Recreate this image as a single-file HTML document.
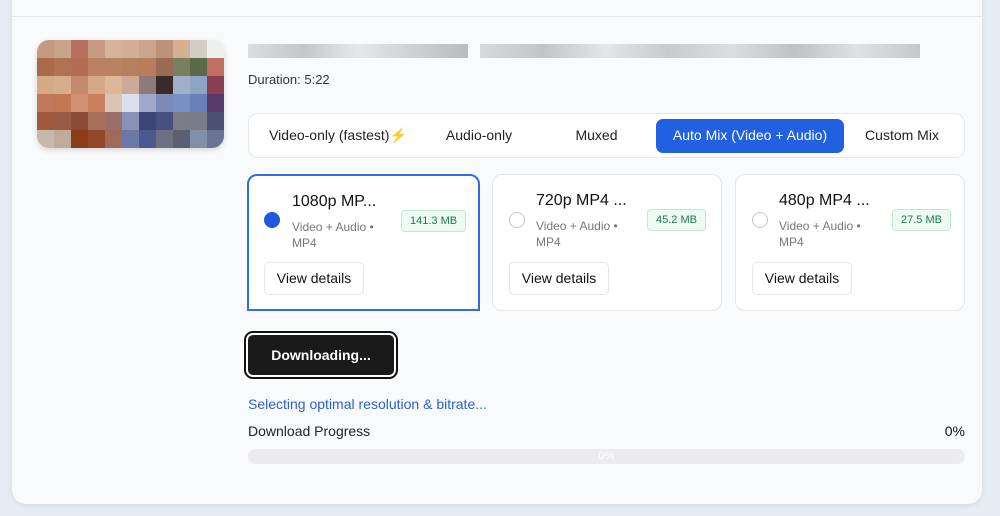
<!DOCTYPE html>
<html><head><style>
*{box-sizing:border-box;margin:0;padding:0}
body{width:1000px;height:516px;background:#e8ecf4;font-family:"Liberation Sans",sans-serif;position:relative;overflow:hidden;color:#111}
.card{position:absolute;left:12px;top:-20px;width:970px;height:524px;background:#f9fafc;border-radius:14px;box-shadow:0 2px 6px rgba(0,0,0,.08)}
.line{position:absolute;left:12px;top:16px;width:970px;height:1px;background:#e4e6ea}
.thumb{position:absolute;left:37px;top:40px;width:187px;height:108px;border-radius:12px;overflow:hidden;display:grid;grid-template-columns:repeat(11,1fr);grid-template-rows:repeat(6,1fr);box-shadow:0 2px 6px rgba(0,0,0,.15)}
.blur{position:absolute;top:44px;height:14px;background:#d4d6da}
.dur{position:absolute;left:248px;top:72px;font-size:13px;color:#333}
.tabs{position:absolute;left:248px;top:113px;width:717px;height:45px;background:#fff;border:1px solid #e5e7eb;border-radius:10px}
.tab{position:absolute;top:5px;height:34px;line-height:32px;font-size:14px;color:#222;text-align:center}
.tab.act{background:#2160e0;color:#fff;border-radius:7px}
.opt{position:absolute;top:174px;height:137px;background:#fff;border:1px solid #e3e5e9;border-radius:10px}
.opt.sel{border:2px solid #2f6fdc;border-radius:10px 10px 0 0}
.radio{position:absolute;left:16px;top:37px;width:16px;height:16px;border-radius:50%;border:1.5px solid #c4c6ca}
.sel .radio{background:#2158e0;border-color:#2158e0}
.t{position:absolute;left:43px;top:17px;font-size:16px;color:#111}
.s{position:absolute;left:43px;top:43px;font-size:12px;color:#777;line-height:16px;width:100px}
.badge{position:absolute;top:34px;height:22px;line-height:20px;padding:0 8px;font-size:11px;color:#1c7a4c;background:#ecfaf2;border:1px solid #bfe9d0;border-radius:4px}
.vd{position:absolute;left:16px;top:87px;width:100px;height:33px;line-height:31px;text-align:center;border:1px solid #e3e5e9;border-radius:5px;font-size:14px;background:#fff}
.btn{position:absolute;left:246px;top:333px;width:150px;height:44px;background:#1a1a1a;border:2px solid #fff;outline:2px solid #111;border-radius:7px;color:#fff;font-weight:bold;font-size:14px;text-align:center;line-height:40px}
</style></head><body>
<div class="card"></div>
<div class="line"></div>
<div class="thumb">
<div style="background:#c49a80"></div><div style="background:#c8a48c"></div><div style="background:#b7705e"></div><div style="background:#c79a86"></div><div style="background:#d6b49c"></div><div style="background:#d2ae96"></div><div style="background:#c9a58d"></div><div style="background:#bc927a"></div><div style="background:#d4b091"></div><div style="background:#d3cdc6"></div><div style="background:#eef0f0"></div>
<div style="background:#a86a48"></div><div style="background:#b07252"></div><div style="background:#b36d55"></div><div style="background:#b98262"></div><div style="background:#b98260"></div><div style="background:#b68060"></div><div style="background:#b97d5d"></div><div style="background:#9a6a52"></div><div style="background:#788060"></div><div style="background:#5a6a48"></div><div style="background:#c07060"></div>
<div style="background:#d4aa88"></div><div style="background:#d7ae8c"></div><div style="background:#c48a6e"></div><div style="background:#d8a888"></div><div style="background:#dcb896"></div><div style="background:#ccaa96"></div><div style="background:#8c7a7c"></div><div style="background:#3a2a28"></div><div style="background:#a0b0c8"></div><div style="background:#90a4c4"></div><div style="background:#8a4050"></div>
<div style="background:#c07a5a"></div><div style="background:#c27652"></div><div style="background:#d49074"></div><div style="background:#c9805e"></div><div style="background:#dcc4b4"></div><div style="background:#dce0ec"></div><div style="background:#a0a8cc"></div><div style="background:#7c8ab8"></div><div style="background:#7890c4"></div><div style="background:#6a80b8"></div><div style="background:#5a3a6a"></div>
<div style="background:#a05840"></div><div style="background:#9a5a48"></div><div style="background:#8c4a38"></div><div style="background:#a8705a"></div><div style="background:#9a6e6a"></div><div style="background:#8a90b8"></div><div style="background:#3c4478"></div><div style="background:#485080"></div><div style="background:#7c7c84"></div><div style="background:#787c88"></div><div style="background:#4a5070"></div>
<div style="background:#c8b8ac"></div><div style="background:#c0aa9a"></div><div style="background:#8a3c1c"></div><div style="background:#92482a"></div><div style="background:#a06a5a"></div><div style="background:#6a78a8"></div><div style="background:#4a5890"></div><div style="background:#6c7084"></div><div style="background:#5a6070"></div><div style="background:#8090a8"></div><div style="background:#6a7490"></div>
</div>
<div class="blur" style="left:248px;width:220px;background:linear-gradient(90deg,#dcdde0,#c4c6ca,#e6e7ea,#cfd0d3,#b9bbbf)"></div>
<div class="blur" style="left:480px;width:440px;background:linear-gradient(90deg,#d8d9dc,#c2c4c8,#e4e5e8,#c9cacd,#dcdde0,#bfc1c5,#e0e1e4,#c6c7cb)"></div>
<div class="dur">Duration: 5:22</div>
<div class="tabs">
<div class="tab" style="left:14px;width:150px">Video-only (fastest)<span style="color:#f2c230">⚡</span></div>
<div class="tab" style="left:175px;width:110px">Audio-only</div>
<div class="tab" style="left:300px;width:95px">Muxed</div>
<div class="tab act" style="left:407px;width:188px">Auto Mix (Video + Audio)</div>
<div class="tab" style="left:598px;width:110px">Custom Mix</div>
</div>
<div class="opt sel" style="left:247px;width:233px"><div class="radio" style="left:15px;top:36px"></div><div class="t">1080p MP...</div><div class="s">Video + Audio • MP4</div><div class="badge" style="left:152px">141.3 MB</div><div class="vd" style="left:15px;top:86px">View details</div></div>
<div class="opt" style="left:492px;width:230px"><div class="radio"></div><div class="t">720p MP4 ...</div><div class="s">Video + Audio • MP4</div><div class="badge" style="left:154px">45.2 MB</div><div class="vd">View details</div></div>
<div class="opt" style="left:735px;width:230px"><div class="radio"></div><div class="t">480p MP4 ...</div><div class="s">Video + Audio • MP4</div><div class="badge" style="left:156px">27.5 MB</div><div class="vd">View details</div></div>
<div class="btn">Downloading...</div>
<div style="position:absolute;left:248px;top:396px;font-size:14px;color:#2a62c9">Selecting optimal resolution &amp; bitrate...</div>
<div style="position:absolute;left:248px;top:423px;font-size:14px;color:#222">Download Progress</div>
<div style="position:absolute;right:35px;top:423px;font-size:14px;color:#111">0%</div>
<div style="position:absolute;left:248px;top:449px;width:717px;height:15px;background:#ececee;border-radius:8px;font-size:11px;color:#fff;text-align:center;line-height:15px">0%</div>
</body></html>
